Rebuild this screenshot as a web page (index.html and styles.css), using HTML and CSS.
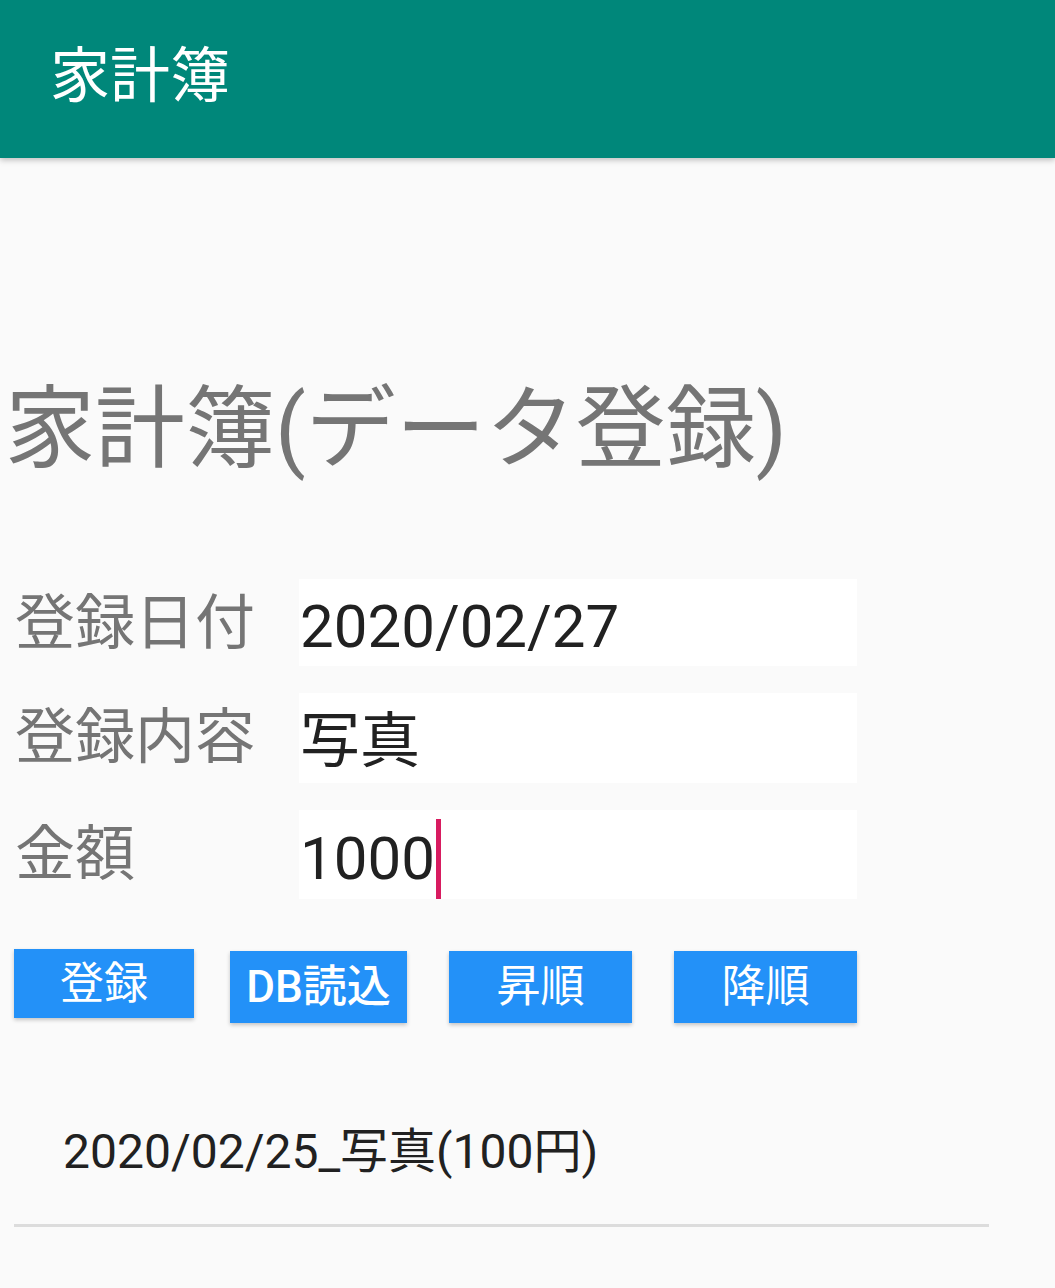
FILE: index.html
```html
<!DOCTYPE html>
<html lang="ja">
<head>
<meta charset="utf-8">
<title>家計簿</title>
<link rel="stylesheet" href="styles.css">
</head>
<body>
<header class="appbar">
  <span class="appbar-title">家計簿</span>
</header>
<main class="content">
  <h1 class="page-title">家計簿(データ登録)</h1>
  <div class="form">
    <label class="form-label">登録日付</label>
    <div class="field">2020/02/27</div>
    <label class="form-label">登録内容</label>
    <div class="field">写真</div>
    <label class="form-label">金額</label>
    <div class="field">1000<span class="caret"></span></div>
  </div>
  <div class="actions">
    <button class="btn btn-first">登録</button>
    <button class="btn btn-db">DB読込</button>
    <button class="btn btn-asc">昇順</button>
    <button class="btn btn-desc">降順</button>
  </div>
  <ul class="list">
    <li class="list-item">2020/02/25_写真(100円)</li>
  </ul>
</main>
</body>
</html>
```
FILE: styles.css
```css
* { box-sizing: border-box; }
html, body {
  margin: 0;
  padding: 0;
  background: #fafafa;
  font-family: Roboto, "Noto Sans CJK JP", sans-serif;
}
.appbar {
  height: 158px;
  background: #00877a;
  display: flex;
  align-items: center;
  padding-left: 50px;
  box-shadow: 0 2px 6px rgba(0,0,0,0.25);
  position: relative;
  z-index: 1;
}
.appbar-title {
  color: #ffffff;
  font-size: 60px;
  line-height: 1;
  margin-top: -4px;
}
.content {
  padding-top: 227px;
}
.page-title {
  margin: 0;
  padding-left: 5px;
  font-size: 90px;
  font-weight: 400;
  line-height: 1;
  color: #757575;
  height: 137px;
}
.form {
  display: grid;
  grid-template-columns: 282px 558px;
  grid-template-rows: 87px 90px 89px;
  row-gap: 27px;
  padding-left: 17px;
  margin-top: 57px;
}
.form-label {
  font-size: 60px;
  color: #757575;
  line-height: 88px;
  height: 88px;
  margin-top: 1px;
  margin-left: -2px;
}
.field {
  background: #ffffff;
  font-size: 60px;
  line-height: 80px;
  color: #212121;
  padding-left: 1px;
  padding-top: 8px;
  display: flex;
  align-items: center;
}
.caret {
  display: inline-block;
  width: 5px;
  height: 80px;
  background: #d81b60;
  margin-left: 1px;
}
.actions {
  display: flex;
  align-items: flex-start;
  padding-left: 14px;
  margin-top: 50px;
}
.btn {
  border: none;
  background: #2391f8;
  color: #ffffff;
  font-family: Roboto, "Noto Sans CJK JP", sans-serif;
  font-size: 44px;
  line-height: 1;
  padding: 0;
  height: 72px;
  margin-top: 2px;
  box-shadow: 0 2px 4px rgba(0,0,0,0.22);
}
.btn-first {
  width: 180px;
  height: 69px;
  margin-top: 0;
}
.btn-db {
  width: 177px;
  margin-left: 36px;
  font-weight: 500;
}
.btn-asc {
  width: 183px;
  margin-left: 42px;
}
.btn-desc {
  width: 183px;
  margin-left: 42px;
}
.list {
  list-style: none;
  margin: 0;
  padding: 0 0 0 14px;
  margin-top: 97px;
}
.list-item {
  width: 975px;
  padding-left: 49px;
  font-size: 48px;
  line-height: 64px;
  color: #212121;
  padding-bottom: 40px;
  border-bottom: 3px solid #dcdcdc;
}
```
